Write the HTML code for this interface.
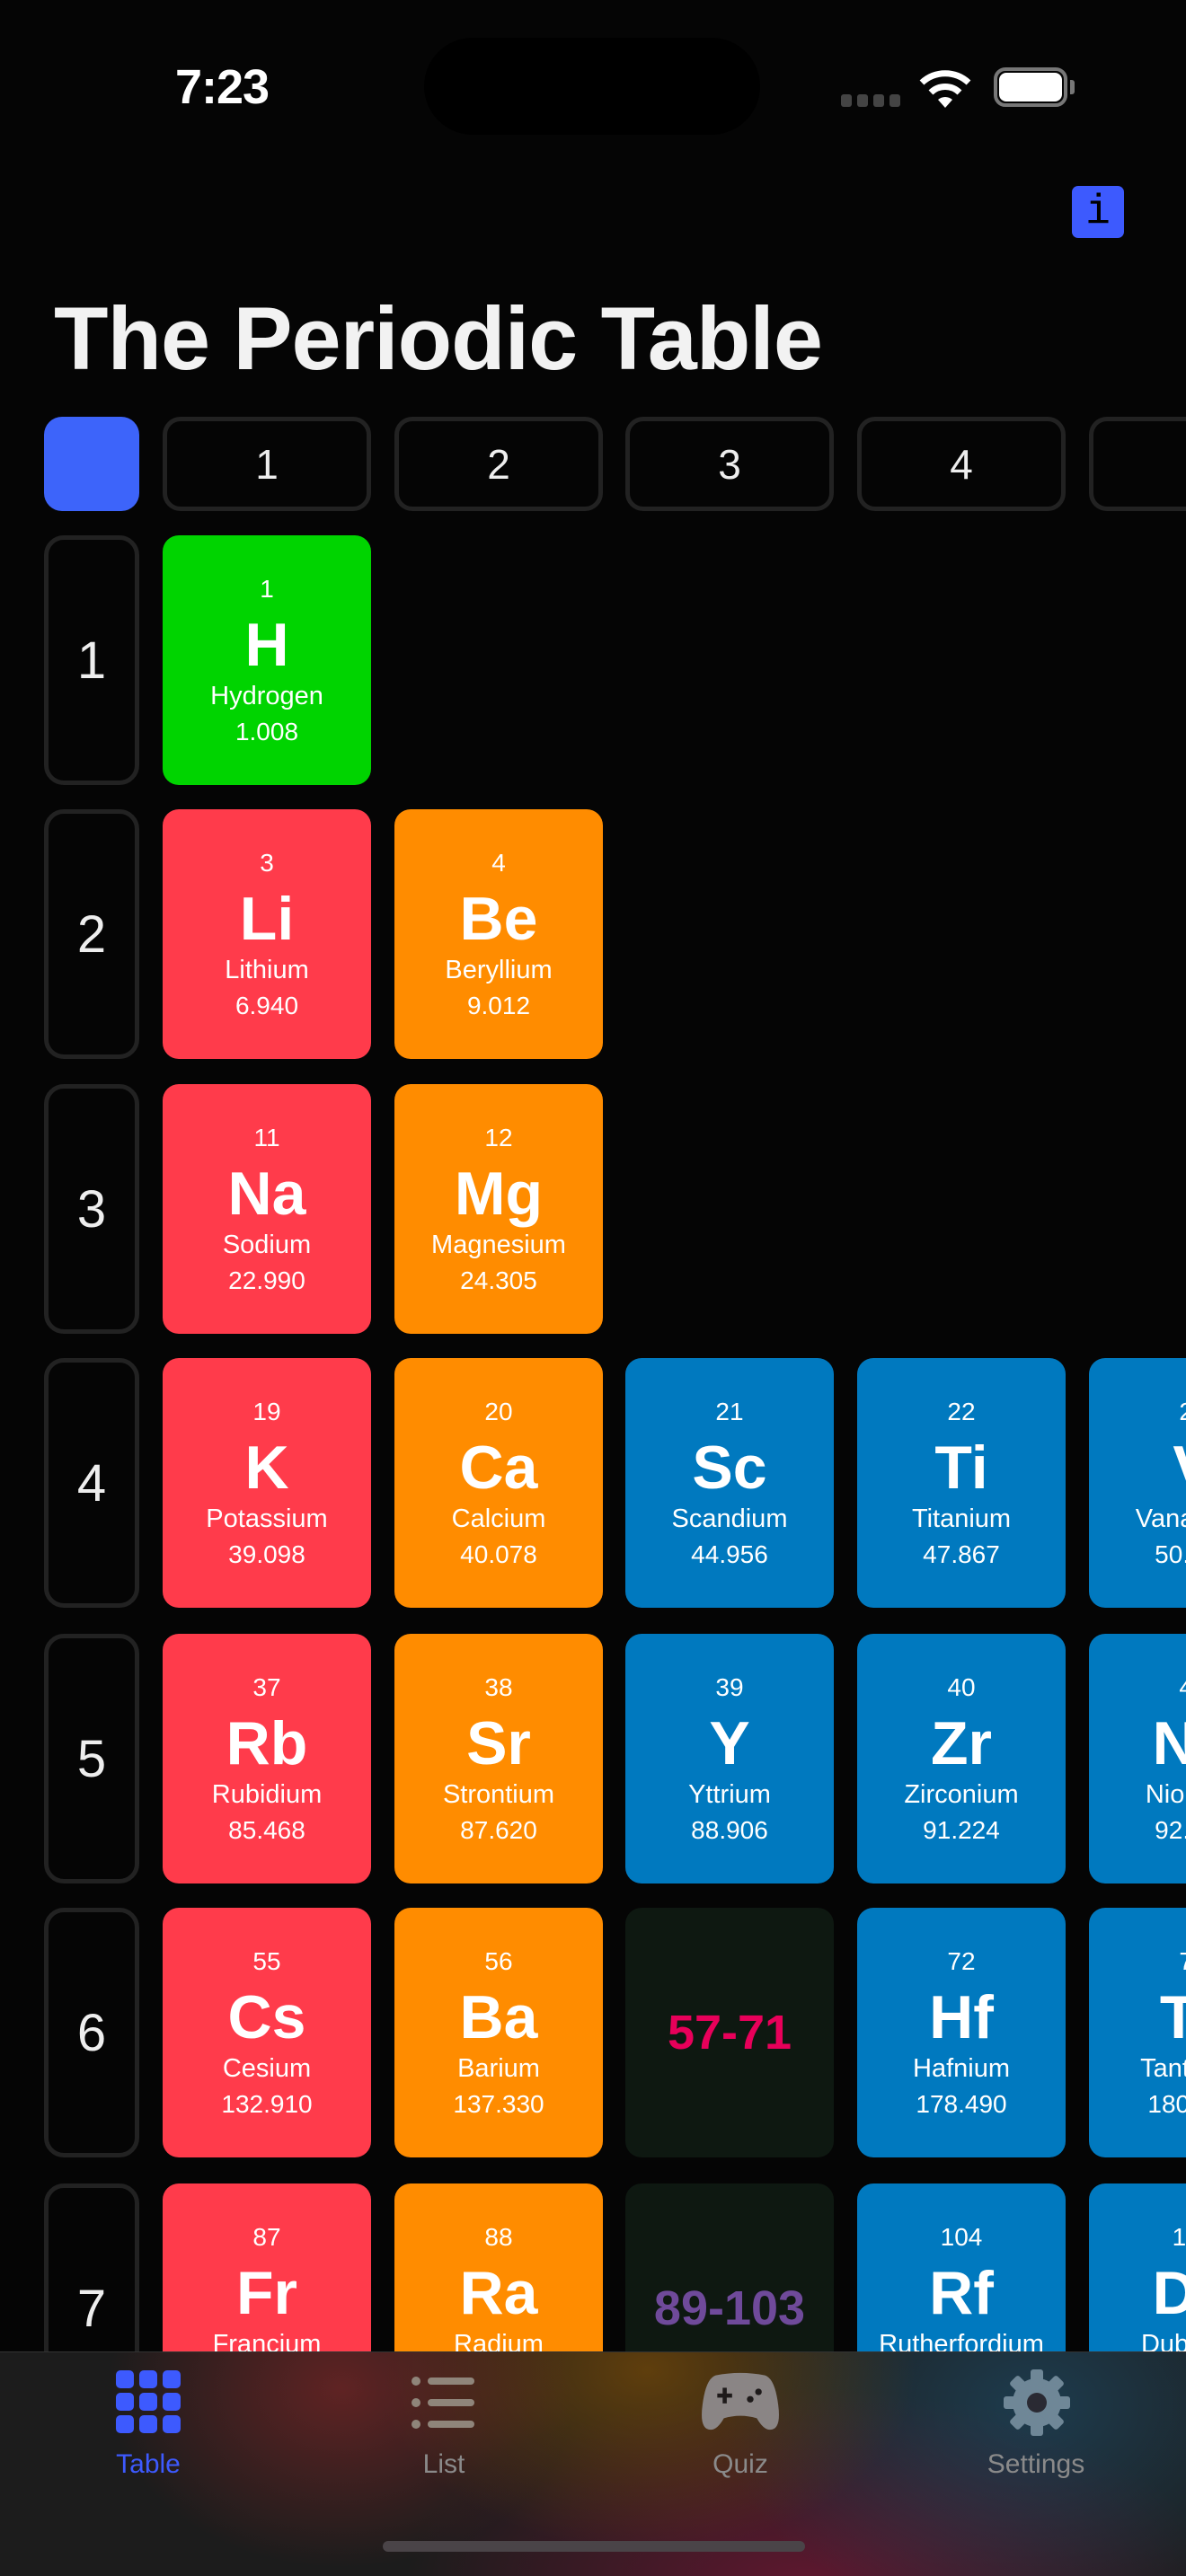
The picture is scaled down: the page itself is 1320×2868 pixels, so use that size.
<!DOCTYPE html>
<html style="overflow:hidden"><head><meta charset="utf-8"><style>
*{margin:0;padding:0;box-sizing:border-box}
body{width:1320px;height:2868px;background:#050505;position:relative;overflow:hidden;font-family:"Liberation Sans",sans-serif;color:#fff}
#w{position:absolute;left:0;top:0;width:1320px;height:2868px;overflow:hidden}
.a{position:absolute}
.hb{position:absolute;top:464px;width:232px;height:105px;border:5px solid #222;border-radius:20px;font-size:46px;display:flex;align-items:center;justify-content:center;color:#eee}
.rl{position:absolute;left:49px;width:106px;height:278px;border:5px solid #222;border-radius:22px;font-size:58px;display:flex;align-items:center;justify-content:center;color:#eee}
.c{position:absolute;width:232px;height:278px;border-radius:18px;text-align:center;overflow:hidden}
.c .n{position:absolute;top:42px;left:0;right:0;font-size:28px;line-height:36px}
.c .s{position:absolute;top:84px;left:0;right:0;font-size:68px;font-weight:bold;line-height:76px}
.c .m{position:absolute;top:161px;left:0;right:0;font-size:29px;line-height:36px}
.c .w{position:absolute;top:201px;left:0;right:0;font-size:28px;line-height:36px}
.g{background:#00d400}.r{background:#ff3b4b}.o{background:#ff8c00}.b{background:#0079bf}.d{background:#0e1811}
.rng{position:absolute;left:0;right:0;top:0;bottom:0;display:flex;align-items:center;justify-content:center;font-size:54px;font-weight:bold}
.tab{position:absolute;top:2618px;left:0;width:1320px;height:250px;overflow:hidden;background:
radial-gradient(ellipse 260px 200px at 380px 40px,rgba(140,40,40,.6),transparent),
radial-gradient(ellipse 300px 200px at 720px 20px,rgba(150,90,0,.55),transparent),
radial-gradient(ellipse 350px 250px at 1150px 60px,rgba(30,80,110,.6),transparent),
radial-gradient(ellipse 450px 220px at 900px 260px,rgba(140,20,60,.6),transparent),
#1c1c1c;border-top:1px solid #333}
.tl{position:absolute;top:108px;font-size:30px;width:200px;margin-left:-100px;text-align:center;color:#8a8a8a}
</style></head><body><div id="w">
<!-- status bar -->
<div class="a" style="left:195px;top:66px;font-size:54px;font-weight:bold;letter-spacing:-1px">7:23</div>
<div class="a" style="left:472px;top:42px;width:374px;height:108px;border-radius:54px;background:#000"></div>
<div class="a" style="left:936px;top:105px;width:12px;height:14px;border-radius:3px;background:#444"></div>
<div class="a" style="left:954px;top:105px;width:12px;height:14px;border-radius:3px;background:#444"></div>
<div class="a" style="left:972px;top:105px;width:12px;height:14px;border-radius:3px;background:#444"></div>
<div class="a" style="left:990px;top:105px;width:12px;height:14px;border-radius:3px;background:#444"></div>
<svg class="a" style="left:1022px;top:74px" width="60" height="46" viewBox="0 0 60 46"><path d="M30 46 L22 37 A12 12 0 0 1 38 37Z" fill="#fff"/><path d="M14 29 A23 23 0 0 1 46 29" stroke="#fff" stroke-width="7" fill="none"/><path d="M4 18 A38 38 0 0 1 56 18" stroke="#fff" stroke-width="7" fill="none"/></svg>
<div class="a" style="left:1106px;top:75px;width:82px;height:44px;border:4px solid #777;border-radius:13px"></div>
<div class="a" style="left:1112px;top:81px;width:70px;height:32px;background:#fff;border-radius:8px"></div>
<div class="a" style="left:1191px;top:89px;width:5px;height:16px;background:#777;border-radius:0 3px 3px 0"></div>
<!-- info -->
<div class="a" style="left:1193px;top:207px;width:58px;height:58px;background:#3d5afe;border-radius:7px;color:#000;font-family:'Liberation Mono',monospace;font-size:46px;text-align:center;line-height:58px">i</div>
<div class="a" style="left:60px;top:320px;font-size:99px;font-weight:bold;color:#f2f2f2;letter-spacing:-1px;white-space:nowrap">The Periodic Table</div>
<!-- header -->
<div class="a" style="left:49px;top:464px;width:106px;height:105px;background:#3d64fa;border-radius:20px"></div>
<div class="hb" style="left:181px">1</div>
<div class="hb" style="left:439px">2</div>
<div class="hb" style="left:696px">3</div>
<div class="hb" style="left:954px">4</div>
<div class="hb" style="left:1212px;width:108px;border-right:none;border-radius:20px 0 0 20px"></div>
<!-- row labels -->
<div class="rl" style="top:596px">1</div>
<div class="rl" style="top:901px">2</div>
<div class="rl" style="top:1207px">3</div>
<div class="rl" style="top:1512px">4</div>
<div class="rl" style="top:1819px">5</div>
<div class="rl" style="top:2124px">6</div>
<div class="rl" style="top:2431px">7</div>
<!-- cells -->
<div class="c g" style="left:181px;top:596px"><div class="n">1</div><div class="s">H</div><div class="m">Hydrogen</div><div class="w">1.008</div></div>

<div class="c r" style="left:181px;top:901px"><div class="n">3</div><div class="s">Li</div><div class="m">Lithium</div><div class="w">6.940</div></div>
<div class="c o" style="left:439px;top:901px"><div class="n">4</div><div class="s">Be</div><div class="m">Beryllium</div><div class="w">9.012</div></div>

<div class="c r" style="left:181px;top:1207px"><div class="n">11</div><div class="s">Na</div><div class="m">Sodium</div><div class="w">22.990</div></div>
<div class="c o" style="left:439px;top:1207px"><div class="n">12</div><div class="s">Mg</div><div class="m">Magnesium</div><div class="w">24.305</div></div>

<div class="c r" style="left:181px;top:1512px"><div class="n">19</div><div class="s">K</div><div class="m">Potassium</div><div class="w">39.098</div></div>
<div class="c o" style="left:439px;top:1512px"><div class="n">20</div><div class="s">Ca</div><div class="m">Calcium</div><div class="w">40.078</div></div>
<div class="c b" style="left:696px;top:1512px"><div class="n">21</div><div class="s">Sc</div><div class="m">Scandium</div><div class="w">44.956</div></div>
<div class="c b" style="left:954px;top:1512px"><div class="n">22</div><div class="s">Ti</div><div class="m">Titanium</div><div class="w">47.867</div></div>
<div class="c b" style="left:1212px;top:1512px"><div class="n">23</div><div class="s">V</div><div class="m">Vanadium</div><div class="w">50.942</div></div>

<div class="c r" style="left:181px;top:1819px"><div class="n">37</div><div class="s">Rb</div><div class="m">Rubidium</div><div class="w">85.468</div></div>
<div class="c o" style="left:439px;top:1819px"><div class="n">38</div><div class="s">Sr</div><div class="m">Strontium</div><div class="w">87.620</div></div>
<div class="c b" style="left:696px;top:1819px"><div class="n">39</div><div class="s">Y</div><div class="m">Yttrium</div><div class="w">88.906</div></div>
<div class="c b" style="left:954px;top:1819px"><div class="n">40</div><div class="s">Zr</div><div class="m">Zirconium</div><div class="w">91.224</div></div>
<div class="c b" style="left:1212px;top:1819px"><div class="n">41</div><div class="s">Nb</div><div class="m">Niobium</div><div class="w">92.906</div></div>

<div class="c r" style="left:181px;top:2124px"><div class="n">55</div><div class="s">Cs</div><div class="m">Cesium</div><div class="w">132.910</div></div>
<div class="c o" style="left:439px;top:2124px"><div class="n">56</div><div class="s">Ba</div><div class="m">Barium</div><div class="w">137.330</div></div>
<div class="c d" style="left:696px;top:2124px"><div class="rng" style="color:#e8005a">57-71</div></div>
<div class="c b" style="left:954px;top:2124px"><div class="n">72</div><div class="s">Hf</div><div class="m">Hafnium</div><div class="w">178.490</div></div>
<div class="c b" style="left:1212px;top:2124px"><div class="n">73</div><div class="s">Ta</div><div class="m">Tantalum</div><div class="w">180.948</div></div>

<div class="c r" style="left:181px;top:2431px"><div class="n">87</div><div class="s">Fr</div><div class="m">Francium</div><div class="w">223.000</div></div>
<div class="c o" style="left:439px;top:2431px"><div class="n">88</div><div class="s">Ra</div><div class="m">Radium</div><div class="w">226.000</div></div>
<div class="c d" style="left:696px;top:2431px"><div class="rng" style="color:#6f4a9a">89-103</div></div>
<div class="c b" style="left:954px;top:2431px"><div class="n">104</div><div class="s">Rf</div><div class="m">Rutherfordium</div><div class="w">267.000</div></div>
<div class="c b" style="left:1212px;top:2431px"><div class="n">105</div><div class="s">Db</div><div class="m">Dubnium</div><div class="w">268.000</div></div>

<!-- tab bar -->
<div class="tab">
<svg class="a" style="left:129px;top:20px" width="72" height="70" viewBox="0 0 72 70" fill="#3d5afe">
<rect x="0" y="0" width="20" height="20" rx="5"/><rect x="26" y="0" width="20" height="20" rx="5"/><rect x="52" y="0" width="20" height="20" rx="5"/>
<rect x="0" y="25" width="20" height="20" rx="5"/><rect x="26" y="25" width="20" height="20" rx="5"/><rect x="52" y="25" width="20" height="20" rx="5"/>
<rect x="0" y="50" width="20" height="20" rx="5"/><rect x="26" y="50" width="20" height="20" rx="5"/><rect x="52" y="50" width="20" height="20" rx="5"/></svg>
<svg class="a" style="left:458px;top:26px" width="72" height="60" viewBox="0 0 72 60" fill="#8f857a">
<circle cx="5" cy="6" r="5"/><circle cx="5" cy="30" r="5"/><circle cx="5" cy="54" r="5"/>
<rect x="18" y="2" width="52" height="8" rx="4"/><rect x="18" y="26" width="52" height="8" rx="4"/><rect x="18" y="50" width="52" height="8" rx="4"/></svg>
<svg class="a" style="left:774px;top:22px" width="100" height="66" viewBox="0 0 100 72">
<path d="M20 4 Q50 -2 80 4 Q92 8 96 40 Q100 70 86 70 Q78 70 70 56 Q50 50 30 56 Q22 70 14 70 Q0 70 4 40 Q8 8 20 4Z" fill="#8a8585"/>
<rect x="22" y="26" width="18" height="5" fill="#1e1a1a"/><rect x="28.5" y="19" width="5" height="19" fill="#1e1a1a"/>
<circle cx="62" cy="33" r="4" fill="#1e1a1a"/><circle cx="72" cy="24" r="4" fill="#1e1a1a"/></svg>
<svg class="a" style="left:1117px;top:18px" width="74" height="76" viewBox="-37 -38 74 76">
<g fill="#6f8797"><circle r="27"/>
<rect x="-7" y="-37" width="14" height="74" rx="3"/>
<rect x="-7" y="-37" width="14" height="74" rx="3" transform="rotate(45)"/>
<rect x="-7" y="-37" width="14" height="74" rx="3" transform="rotate(90)"/>
<rect x="-7" y="-37" width="14" height="74" rx="3" transform="rotate(135)"/></g>
<circle r="11" fill="#2a2a33"/></svg>
<div class="tl" style="left:165px;color:#3d5afe">Table</div>
<div class="tl" style="left:494px">List</div>
<div class="tl" style="left:824px">Quiz</div>
<div class="tl" style="left:1153px">Settings</div>
<div class="a" style="left:426px;top:210px;width:470px;height:12px;border-radius:6px;background:#4a4448"></div>
</div>
</div></body></html>
